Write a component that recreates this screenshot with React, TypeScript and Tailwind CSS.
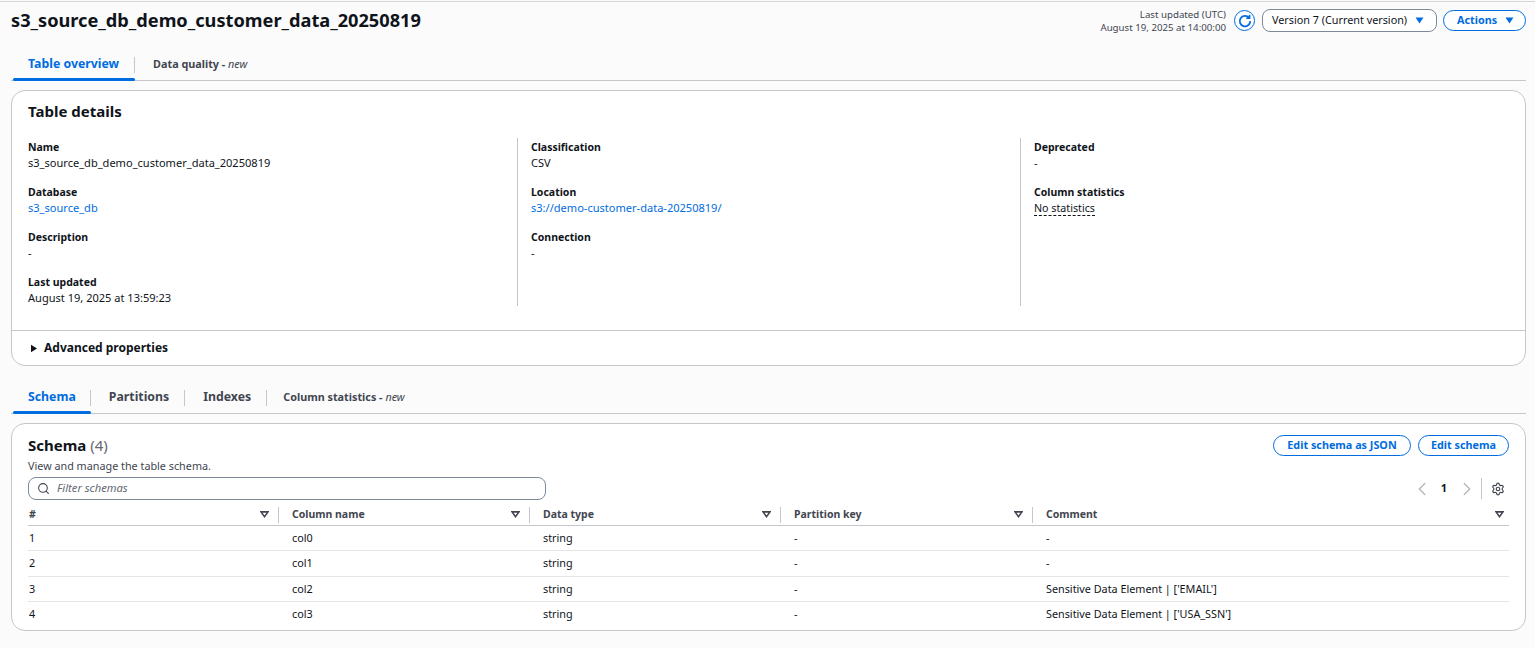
import { ChevronLeft, ChevronRight, Search, Settings } from "lucide-react";

const DETAIL_COLUMNS = [
  [
    { label: "Name", value: "s3_source_db_demo_customer_data_20250819" },
    { label: "Database", value: "s3_source_db", link: true },
    { label: "Description", value: "-" },
    { label: "Last updated", value: "August 19, 2025 at 13:59:23" },
  ],
  [
    { label: "Classification", value: "CSV" },
    { label: "Location", value: "s3://demo-customer-data-20250819/", link: true },
    { label: "Connection", value: "-" },
  ],
  [
    { label: "Deprecated", value: "-" },
    { label: "Column statistics", value: "No statistics", dashed: true },
  ],
];

const COLUMNS = ["#", "Column name", "Data type", "Partition key", "Comment"];

const ROWS = [
  { height: "h-[25px]", cells: ["1", "col0", "string", "-", "-"] },
  { height: "h-[26px]", cells: ["2", "col1", "string", "-", "-"] },
  { height: "h-[25px]", cells: ["3", "col2", "string", "-", "Sensitive Data Element | ['EMAIL']"] },
  { height: "h-[25px]", cells: ["4", "col3", "string", "-", "Sensitive Data Element | ['USA_SSN']"] },
];

const ROW_GRID = "grid grid-cols-[250px_251px_251px_252px_1fr]";

function Caret({ className }: { className?: string }) {
  return (
    <svg viewBox="0 0 10 8" className={className} fill="currentColor">
      <path d="M0.5 0.5h9L5 7.5z" />
    </svg>
  );
}

function SortIcon() {
  return (
    <svg viewBox="0 0 10 8" className="w-[9px] h-[7px] text-[#424650]" fill="none" stroke="currentColor" strokeWidth="1.8">
      <path d="M1 1h8L5 6.5z" />
    </svg>
  );
}

function PillButton({ children, className }: { children: React.ReactNode; className: string }) {
  return (
    <button className={`h-[21px] rounded-full border border-[#006ce0] bg-white text-[10.8px] font-bold text-[#006ce0] flex items-center ${className}`}>
      {children}
    </button>
  );
}

function Tab({
  active,
  small,
  pad = "pl-[18px] pr-4",
  last,
  children,
}: {
  active?: boolean;
  small?: boolean;
  pad?: string;
  last?: boolean;
  children: React.ReactNode;
}) {
  return (
    <div
      className={`relative h-full flex items-center ${pad} ${
        last ? "" : "after:absolute after:right-0 after:top-[9px] after:h-[16px] after:w-px after:bg-[#c6c6cd]"
      }`}
    >
      <span className={`font-bold whitespace-nowrap ${small ? "text-[10.8px]" : "text-[12.3px]"} ${active ? "text-[#006ce0]" : "text-[#424650]"}`}>
        {children}
      </span>
      {active && <span className="absolute left-0 right-0 bottom-[-1px] h-[3px] rounded-full bg-[#006ce0]" />}
    </div>
  );
}

function NewTag() {
  return <span className="font-normal italic text-[#424650]"> new</span>;
}

export default function App() {
  return (
    <div className="min-h-[648px] bg-[#fbfbfc] pt-px text-[#0f141a] font-['Noto_Sans','Open_Sans',sans-serif] overflow-hidden">
      <div className="border-t border-[#d5d5da] pl-[11px] pr-[9px]">
        {/* Page header */}
        <div className="flex items-start justify-between h-[41px]">
          <h1 className="text-[18.2px] font-bold leading-[36px] whitespace-nowrap">s3_source_db_demo_customer_data_20250819</h1>
          <div className="flex items-center gap-[6px] pt-[5.5px]">
            <div className="text-right text-[9.7px] leading-[13px] text-[#424650] mr-[2px]">
              <div>Last updated (UTC)</div>
              <div>August 19, 2025 at 14:00:00</div>
            </div>
            <button className="w-[21px] h-[21px] rounded-full border border-[#006ce0] bg-white flex items-center justify-center text-[#006ce0] mr-px">
              <svg viewBox="0 0 16 16" className="w-[14px] h-[14px]" fill="none" stroke="currentColor" strokeWidth="2">
                <path d="M12.6 4.2A6 6 0 1 0 14 8" />
                <path d="M13.2 1.2v3.6H9.6" />
              </svg>
            </button>
            <button className="h-[23px] w-[175px] rounded-[8px] border border-[#7d8998] bg-white flex items-center justify-between pl-[9px] pr-[12px] text-[10.8px] text-[#0f141a]">
              <span className="whitespace-nowrap">Version 7 (Current version)</span>
              <Caret className="w-[9px] h-[7px] text-[#006ce0]" />
            </button>
            <PillButton className="w-[83px] pl-[13px] gap-[8px]">
              <span>Actions</span>
              <Caret className="w-[9px] h-[7px]" />
            </PillButton>
          </div>
        </div>

        {/* Main tabs */}
        <div className="h-[38px] border-b border-[#c6c6cd] flex items-start pl-[2px] pt-[5px]">
          <div className="flex h-[33px] items-center pb-[1px]">
            <Tab active pad="pl-[15px] pr-4">
              Table overview
            </Tab>
            <Tab small last>
              Data quality -<NewTag />
            </Tab>
          </div>
        </div>

        {/* Table details card */}
        <section className="mt-[9px] h-[276px] rounded-[14px] border border-[#c6c6cd] bg-white flex flex-col">
          <h2 className="h-[46px] pl-4 pt-[8px] text-[15px] leading-[24px] font-bold">Table details</h2>
          <div className="flex pl-4 h-[169px] pt-px">
            {DETAIL_COLUMNS.map((column, i) => (
              <div
                key={i}
                className={`flex flex-col gap-[13px] pt-px ${
                  i === 0 ? "w-[489px]" : i === 1 ? "w-[503px] border-l border-[#c6c6cd] pl-[13px]" : "flex-1 border-l border-[#c6c6cd] pl-[13px]"
                }`}
              >
                {column.map((item) => (
                  <div key={item.label} className="text-[10.5px] leading-[16px] h-[32px]">
                    <div className="font-bold whitespace-nowrap">{item.label}</div>
                    <div className={`whitespace-nowrap text-[11.05px] ${item.link ? "text-[#006ce0]" : ""}`}>
                      {item.dashed ? (
                        <span className="text-[10.7px] border-b border-dashed border-[#0f141a]">{item.value}</span>
                      ) : (
                        item.value
                      )}
                    </div>
                  </div>
                ))}
              </div>
            ))}
          </div>
          <div className="mt-[24px] flex-1 border-t border-[#c6c6cd] flex items-center pl-[19px] gap-[7px]">
            <svg viewBox="0 0 7 10" className="w-[6px] h-[9px] text-[#0f141a]" fill="currentColor">
              <path d="M0 0.5v9L7 5z" />
            </svg>
            <span className="text-[12px] font-bold">Advanced properties</span>
          </div>
        </section>

        {/* Schema tabs */}
        <div className="mt-[13px] h-[35px] border-b border-[#c6c6cd] flex items-start pt-[2px]">
          <div className="flex h-[33px] items-center pb-[1px] pl-[2px]">
            <Tab active pad="pl-[15px] pr-[15px]">
              Schema
            </Tab>
            <Tab>Partitions</Tab>
            <Tab>Indexes</Tab>
            <Tab small last pad="pl-[16px] pr-4">
              Column statistics -<NewTag />
            </Tab>
          </div>
        </div>

        {/* Schema card */}
        <section className="mt-[9px] h-[208px] rounded-[14px] border border-[#c6c6cd] bg-white pl-4 pr-4 pt-[10px]">
          <div className="flex items-start justify-between">
            <div>
              <h2 className="text-[15px] leading-[22px] font-bold">
                Schema <span className="font-normal text-[#656871]">(4)</span>
              </h2>
              <p className="text-[10.8px] leading-[14px] mt-[3px] text-[#424650]">View and manage the table schema.</p>
            </div>
            <div className="flex gap-[7px] mt-px">
              <PillButton className="w-[138px] justify-center">Edit schema as JSON</PillButton>
              <PillButton className="w-[91px] justify-center">Edit schema</PillButton>
            </div>
          </div>

          <div className="flex items-center justify-between mt-[4px]">
            <div className="w-[518px] h-[23px] rounded-[8px] border border-[#7d8998] flex items-center pl-[8px] gap-[7px]">
              <Search className="w-[13px] h-[13px] text-[#424650]" strokeWidth={2} />
              <span className="text-[11.2px] italic text-[#656871]">Filter schemas</span>
            </div>
            <div className="flex items-center text-[#b4b4bb]">
              <ChevronLeft className="w-[22px] h-[22px]" strokeWidth={1.4} />
              <span className="ml-[8px] mr-[9px] text-[11px] font-bold text-[#0f141a]">1</span>
              <ChevronRight className="w-[22px] h-[22px]" strokeWidth={1.4} />
              <span className="ml-[3px] mr-[9px] w-px h-[21px] bg-[#c6c6cd]" />
              <Settings className="w-[14px] h-[14px] text-[#424650] mr-[4px]" strokeWidth={2} />
            </div>
          </div>

          {/* Table */}
          <div className={`${ROW_GRID} h-[23px] mt-[3px] border-b border-[#c6c6cd] items-center`}>
            {COLUMNS.map((name, i) => (
              <div
                key={name}
                className={`flex items-center justify-between h-[16px] mt-px text-[10.5px] font-bold text-[#424650] ${i === 0 ? "pl-px" : "pl-[14px]"} ${
                  i < 4 ? "pr-[9px] -mr-px border-r border-[#c6c6cd]" : "pr-[5px]"
                }`}
              >
                <span>{name}</span>
                <SortIcon />
              </div>
            ))}
          </div>
          {ROWS.map((row, r) => (
            <div key={r} className={`${ROW_GRID} ${row.height} text-[10.8px] items-center ${r < 3 ? "border-b border-[#e5e5e9]" : ""}`}>
              {row.cells.map((cell, c) => (
                <div key={c} className={`whitespace-nowrap ${c === 0 ? "pl-px" : "pl-[14px]"}`}>
                  {cell}
                </div>
              ))}
            </div>
          ))}
        </section>
      </div>
    </div>
  );
}
